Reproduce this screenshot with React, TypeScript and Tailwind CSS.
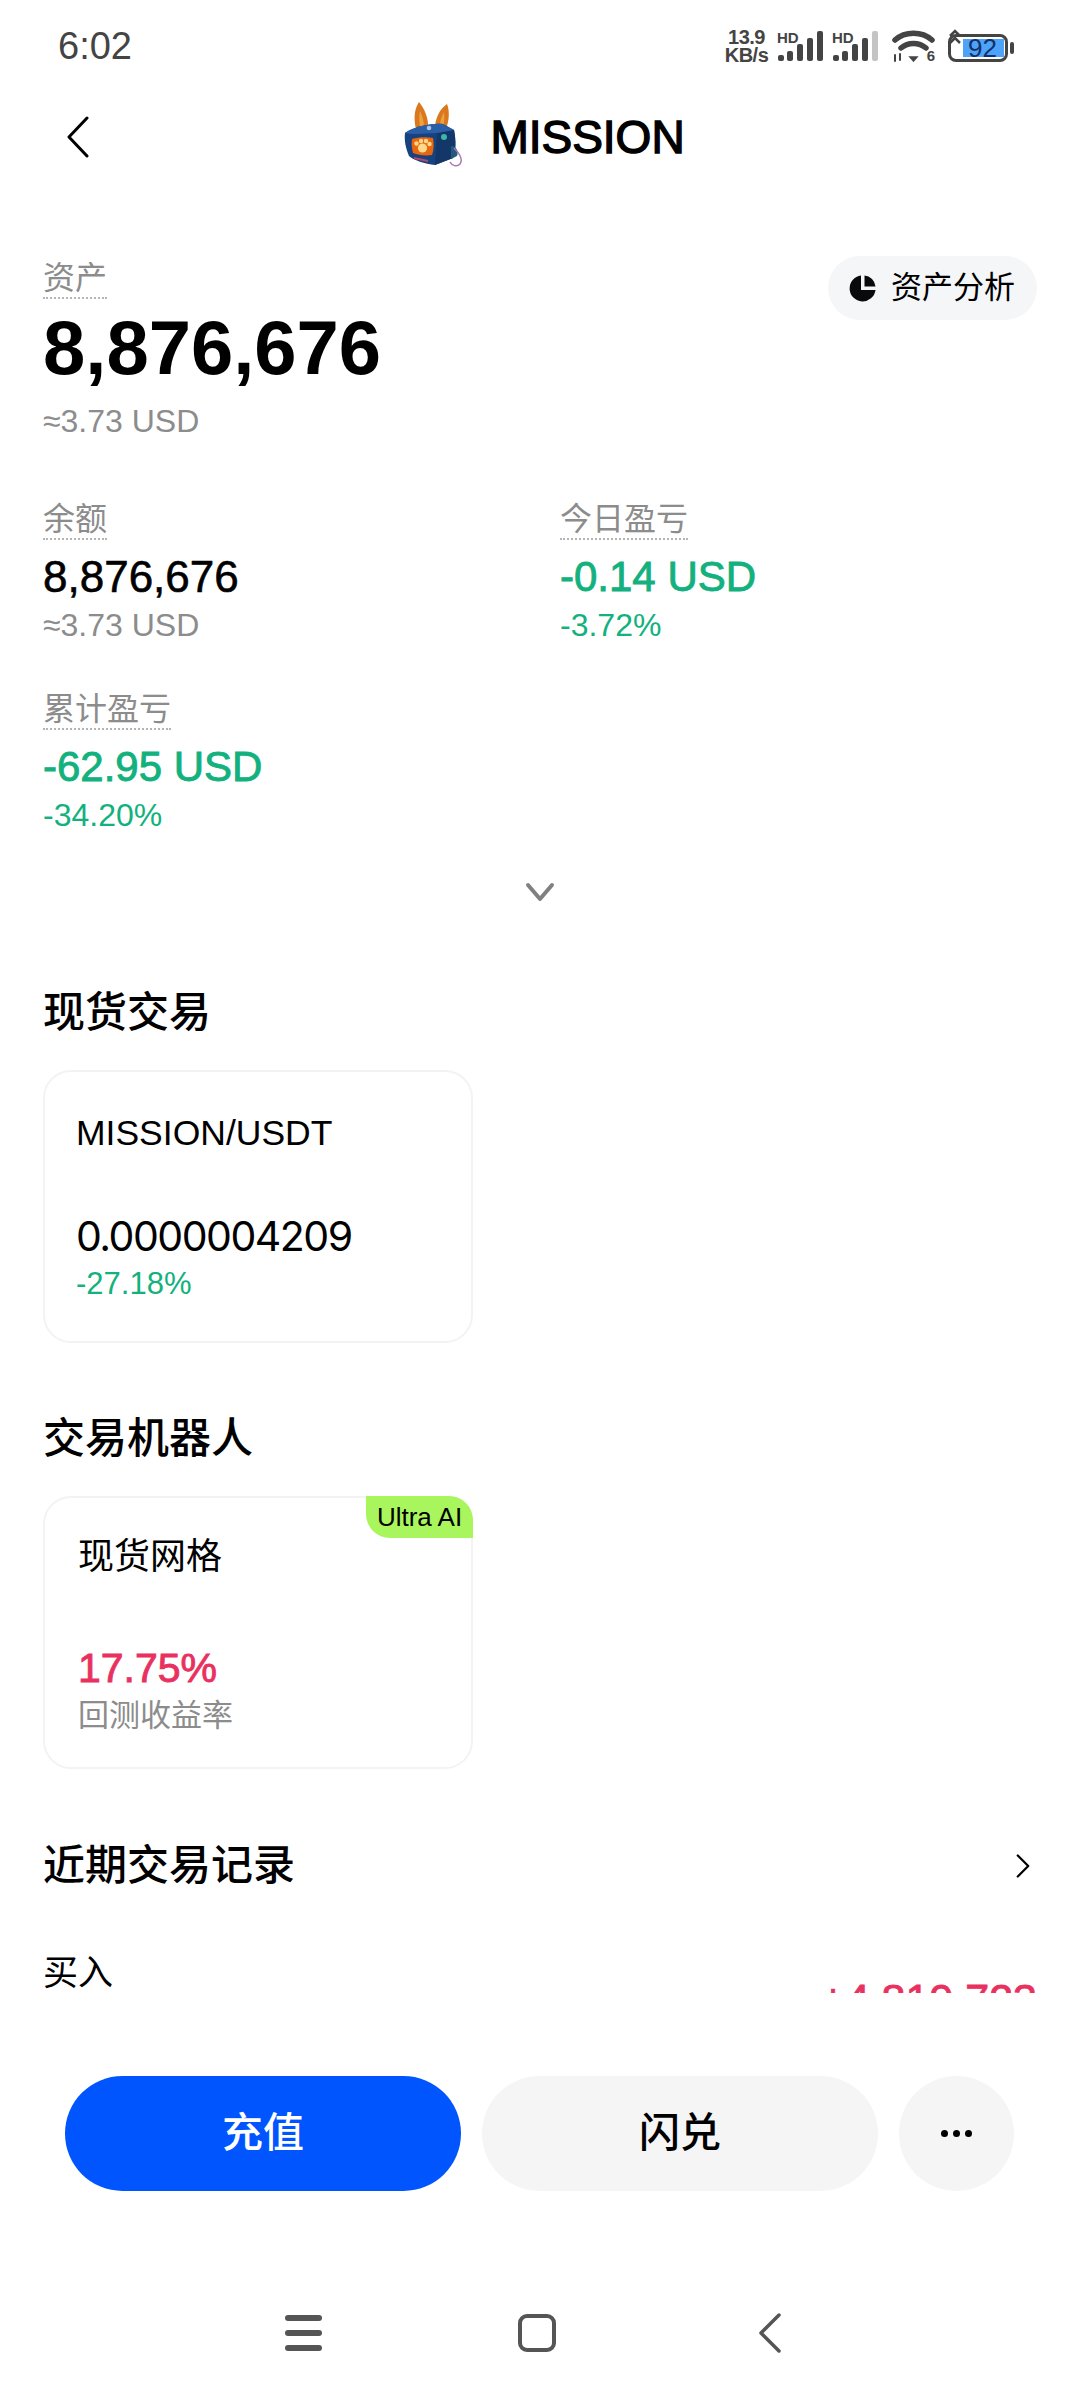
const GREEN = 'text-[#12b17e]'
const LATIN = "font-['Liberation_Sans','Noto_Sans_CJK_SC',sans-serif]"

const Label = ({ text }: { text: string }) => (
  <div className="flex">
    <span className="h-[39px] border-b-2 border-dotted border-[#b5b5b5] text-[32px] leading-[36px] text-[#8c8c8c]">{text}</span>
  </div>
)

const Metric = ({ label, value, sub, tone }: { label: string; value: string; sub: string; tone?: string }) => (
  <div className="h-[190px]">
    <Label text={label} />
    <div className={`mt-[9px] leading-[56px] ${tone ? `text-[42px] [-webkit-text-stroke:0.9px] ${tone}` : 'text-[44px] text-black [-webkit-text-stroke:0.6px]'}`}>{value}</div>
    <div className={`text-[32px] leading-[40px] ${tone ?? 'text-[#8c8c8c]'}`}>{sub}</div>
  </div>
)

const SectionTitle = ({ text }: { text: string }) => (
  <h2 className="text-[42px] leading-[56px] font-medium text-black">{text}</h2>
)

const Signal = ({ dim }: { dim?: boolean }) => (
  <div className="relative h-[32px] w-[45px]">
    <span className="absolute top-[0px] left-[-1px] text-[15px] leading-[15px] font-bold text-[#444]">HD</span>
    <svg viewBox="0 0 45 32" className="absolute inset-0 h-full w-full" fill="#444">
      <rect x="0" y="25" width="6" height="6" rx="2" />
      <rect x="9" y="21" width="6" height="10" rx="2" />
      <rect x="19" y="14" width="6" height="17" rx="2" />
      <rect x="29" y="8" width="6" height="23" rx="2" />
      <rect x="39" y="1" width="6" height="30" rx="2" fill={dim ? '#c4c4c4' : '#444'} />
    </svg>
  </div>
)

const Wifi = () => (
  <div className="relative h-[32px] w-[43px]">
    <svg viewBox="0 0 43 32" className="absolute inset-0 h-full w-full" fill="none" stroke="#444" strokeWidth="5.5" strokeLinecap="round">
      <path d="M3 10C13 1 30 1 40 10" />
      <path d="M9 18C16 12 27 12 34 18" />
      <path d="M18 27h7l-3.5 4z" fill="#444" strokeWidth="1.5" />
      <path d="M3 25v6M8 24v6" strokeWidth="2" />
    </svg>
    <span className="absolute right-0 bottom-[-1px] text-[15px] leading-[15px] font-bold text-[#444]">6</span>
  </div>
)

const Battery = () => (
  <div className="relative h-[32px] w-[66px]">
    <div className="absolute top-[4px] left-0 h-[28px] w-[60px] rounded-[8px] border-[3px] border-[#444] bg-white" />
    <div className="absolute top-[9px] left-[15px] h-[18px] w-[41px] bg-[#4da3f7]" />
    <div className="absolute top-[12px] right-0 h-[12px] w-[4px] rounded-full bg-[#444]" />
    <svg viewBox="0 0 14 18" className="absolute top-[-2px] left-0 h-[18px] w-[14px]" fill="none" stroke="#444" strokeWidth="2.5">
      <path d="M2 8l5-5 5 5M2 15l5-5 5 5" />
    </svg>
    <span className="absolute top-[5px] left-[20px] text-[26px] leading-[26px] text-[#12306b]">92</span>
  </div>
)

// token mascot: boxy blue robot with orange ears and a paw on its screen
const MissionLogo = () => (
  <svg viewBox="0 0 66 70" className="mb-[6px] h-[70px] w-[66px]">
    <path d="M17 30C14 18 16 9 20 3c5 6 10 16 9 27z" fill="#d9781c" />
    <path d="M36 27C37 17 42 9 48 5c3 7 2 17-1 25z" fill="#d9781c" />
    <path d="M21 28c-1-7-1-12 0-16 2 4 4 10 4 16zM41 27c0-6 2-10 4-14 1 5 0 11-1 16z" fill="#f2a03d" />
    <path d="M6 34C14 28 32 24 44 25l11 6c2 10 2 20-1 28l-18 7C26 65 14 61 10 57 7 50 5 42 6 34z" fill="#174280" />
    <path d="M38 34l17-3c2 10 2 20-1 28l-18 7z" fill="#133768" />
    <path d="M6 34C14 28 32 24 44 25l11 6-17 3C28 34 16 36 6 34z" fill="#2a5fa8" />
    <path d="M13 40c7-2 15-2 21-1 1 5 1 12-1 17-7 1-14 0-19-2-1-4-2-9-1-14z" fill="#e8660e" />
    <circle cx="23.5" cy="49" r="4.6" fill="#ffd98a" />
    <circle cx="17.5" cy="44.5" r="2.2" fill="#ffd98a" />
    <circle cx="22" cy="42" r="2.2" fill="#ffd98a" />
    <circle cx="27" cy="42" r="2.2" fill="#ffd98a" />
    <circle cx="30.5" cy="45" r="2.2" fill="#ffd98a" />
    <circle cx="45" cy="38" r="3" fill="#3cb7a8" />
    <circle cx="30" cy="29" r="2.3" fill="#a9c6e6" />
    <path d="M52 47c5 0 8 5 6 10l-6 3z" fill="#225a80" />
    <path d="M55 49c6 6 9 12 6 16-3 3-8 2-10-2" fill="none" stroke="#a675b0" strokeWidth="1.5" />
    <path d="M15 59l14 3" stroke="#b0496c" strokeWidth="2" />
  </svg>
)

const NavBar = () => (
  <div className="flex h-[60px] items-center pl-[285px]">
    <div className="flex h-[36px] w-[37px] flex-col justify-between">
      <span className="h-[6px] rounded-full bg-[#555]" />
      <span className="h-[6px] rounded-full bg-[#555]" />
      <span className="h-[6px] rounded-full bg-[#555]" />
    </div>
    <div className="ml-[196px] h-[38px] w-[38px] rounded-[9px] border-[4px] border-[#555]" />
    <svg viewBox="0 0 24 40" className="ml-[201px] h-[40px] w-[24px]" fill="none" stroke="#555" strokeWidth="3.5" strokeLinecap="round" strokeLinejoin="round">
      <path d="M22 2L4 20l18 18" />
    </svg>
  </div>
)

export default function App() {
  return (
    <div className={`flex h-[2400px] w-[1080px] flex-col overflow-hidden bg-white ${LATIN}`}>
      <div className="flex h-[92px] items-center justify-between pr-[66px] pl-[58px]">
        <span className="text-[38px] text-[#444]">6:02</span>
        <div className="flex items-center">
          <div className="w-[47px] text-center text-[20px] leading-[18px] font-bold tracking-[-0.5px] text-[#444]">
            13.9
            <br />
            KB/s
          </div>
          <div className="ml-[8px]">
            <Signal />
          </div>
          <div className="ml-[10px]">
            <Signal dim />
          </div>
          <div className="ml-[14px]">
            <Wifi />
          </div>
          <div className="ml-[13px]">
            <Battery />
          </div>
        </div>
      </div>

      <header className="relative flex h-[90px] items-center justify-center gap-[25px] pl-[4px]">
        <svg viewBox="0 0 22 42" className="absolute top-[24px] left-[67px] h-[42px] w-[22px]" fill="none" stroke="#000" strokeWidth="3" strokeLinecap="round" strokeLinejoin="round">
          <path d="M20 2L2 21l18 19" />
        </svg>
        <MissionLogo />
        <span className="text-[46px] leading-[56px] text-black [-webkit-text-stroke:1.4px]">MISSION</span>
      </header>

      <div className="h-[1811px] overflow-hidden px-[43px] pt-[78px]">
        <div className="flex items-start justify-between">
          <div>
            <Label text="资产" />
            <div className="mt-[7px] text-[76px] leading-[84px] font-bold text-black">8,876,676</div>
            <div className="mt-[11px] text-[32px] leading-[40px] text-[#8c8c8c]">≈3.73 USD</div>
          </div>
          <button className="mt-[-4px] flex h-[64px] w-[209px] items-center gap-[14px] rounded-full bg-[#f5f6f7] pl-[21px]">
            <svg viewBox="0 0 28 28" className="h-[28px] w-[28px]" fill="#0a0a0a">
              <path d="M12 1.5A13 13 0 1 0 26.5 16H12z" />
              <path d="M15.5 1.5V12.5H26.5A12 12 0 0 0 15.5 1.5z" />
            </svg>
            <span className="text-[31px] leading-[40px] text-black">资产分析</span>
          </button>
        </div>

        <div className="mt-[60px] grid grid-cols-[517px_1fr]">
          <Metric label="余额" value="8,876,676" sub="≈3.73 USD" />
          <Metric label="今日盈亏" value="-0.14 USD" sub="-3.72%" tone={GREEN} />
          <Metric label="累计盈亏" value="-62.95 USD" sub="-34.20%" tone={GREEN} />
        </div>

        <div className="mt-[-14px] flex h-[50px] items-center justify-center">
          <svg viewBox="0 0 30 20" className="h-[20px] w-[30px]" fill="none" stroke="#808080" strokeWidth="4" strokeLinecap="round" strokeLinejoin="round">
            <path d="M3 3l12 14L27 3" />
          </svg>
        </div>

        <div className="mt-[68px]">
          <SectionTitle text="现货交易" />
        </div>
        <div className="mt-[29px] h-[273px] w-[430px] rounded-[28px] border-2 border-[#f3f3f3] px-[31px] pt-[39px]">
          <div className="text-[35.5px] leading-[44px] text-black">MISSION/USDT</div>
          <div className="mt-[57px] font-['Inter'] text-[41px] leading-[48px] tracking-[-1.5px] text-black">0.0000004209</div>
          <div className={`mt-[4px] text-[31px] leading-[40px] ${GREEN}`}>-27.18%</div>
        </div>

        <div className="mt-[68px]">
          <SectionTitle text="交易机器人" />
        </div>
        <div className="relative mt-[29px] h-[273px] w-[430px] rounded-[28px] border-2 border-[#f3f3f3] px-[33px] pt-[37px]">
          <span className="absolute top-[-2px] right-[-2px] flex h-[42px] w-[107px] items-center justify-center rounded-tr-[24px] rounded-bl-[24px] bg-[#a9f55d] text-[26px] text-black">
            Ultra AI
          </span>
          <div className="text-[36px] leading-[44px] text-black">现货网格</div>
          <div className="mt-[65px] text-[41px] leading-[48px] text-[#e8315f] [-webkit-text-stroke:0.9px]">17.75%</div>
          <div className="mt-[2px] text-[31px] leading-[44px] text-[#8c8c8c]">回测收益率</div>
        </div>

        <div className="mt-[69px] flex h-[56px] items-center justify-between">
          <SectionTitle text="近期交易记录" />
          <svg viewBox="0 0 16 28" className="mr-[7px] h-[28px] w-[14px]" fill="none" stroke="#000" strokeWidth="2.6" strokeLinecap="round" strokeLinejoin="round">
            <path d="M2 2l12 12L2 26" />
          </svg>
        </div>
        <div className="mt-[57px] flex items-start justify-between">
          <span className="text-[35px] leading-[44px] text-black">买入</span>
          <span className="mt-[24px] text-[43px] leading-[48px] text-[#e8315f] [-webkit-text-stroke:0.9px]">+4,819,723</span>
        </div>
      </div>

      <div className="flex gap-[21px] pt-[83px] pl-[65px]">
        <button className="h-[115px] w-[396px] rounded-full bg-[#0055ff] text-[41px] font-medium text-white">充值</button>
        <button className="h-[115px] w-[396px] rounded-full bg-[#f5f5f5] text-[41px] font-medium text-black">闪兑</button>
        <button className="flex h-[115px] w-[115px] items-center justify-center gap-[5px] rounded-full bg-[#f5f5f5]">
          <span className="h-[7px] w-[7px] rounded-full bg-black" />
          <span className="h-[7px] w-[7px] rounded-full bg-black" />
          <span className="h-[7px] w-[7px] rounded-full bg-black" />
        </button>
      </div>

      <div className="mt-[112px]">
        <NavBar />
      </div>
    </div>
  )
}
